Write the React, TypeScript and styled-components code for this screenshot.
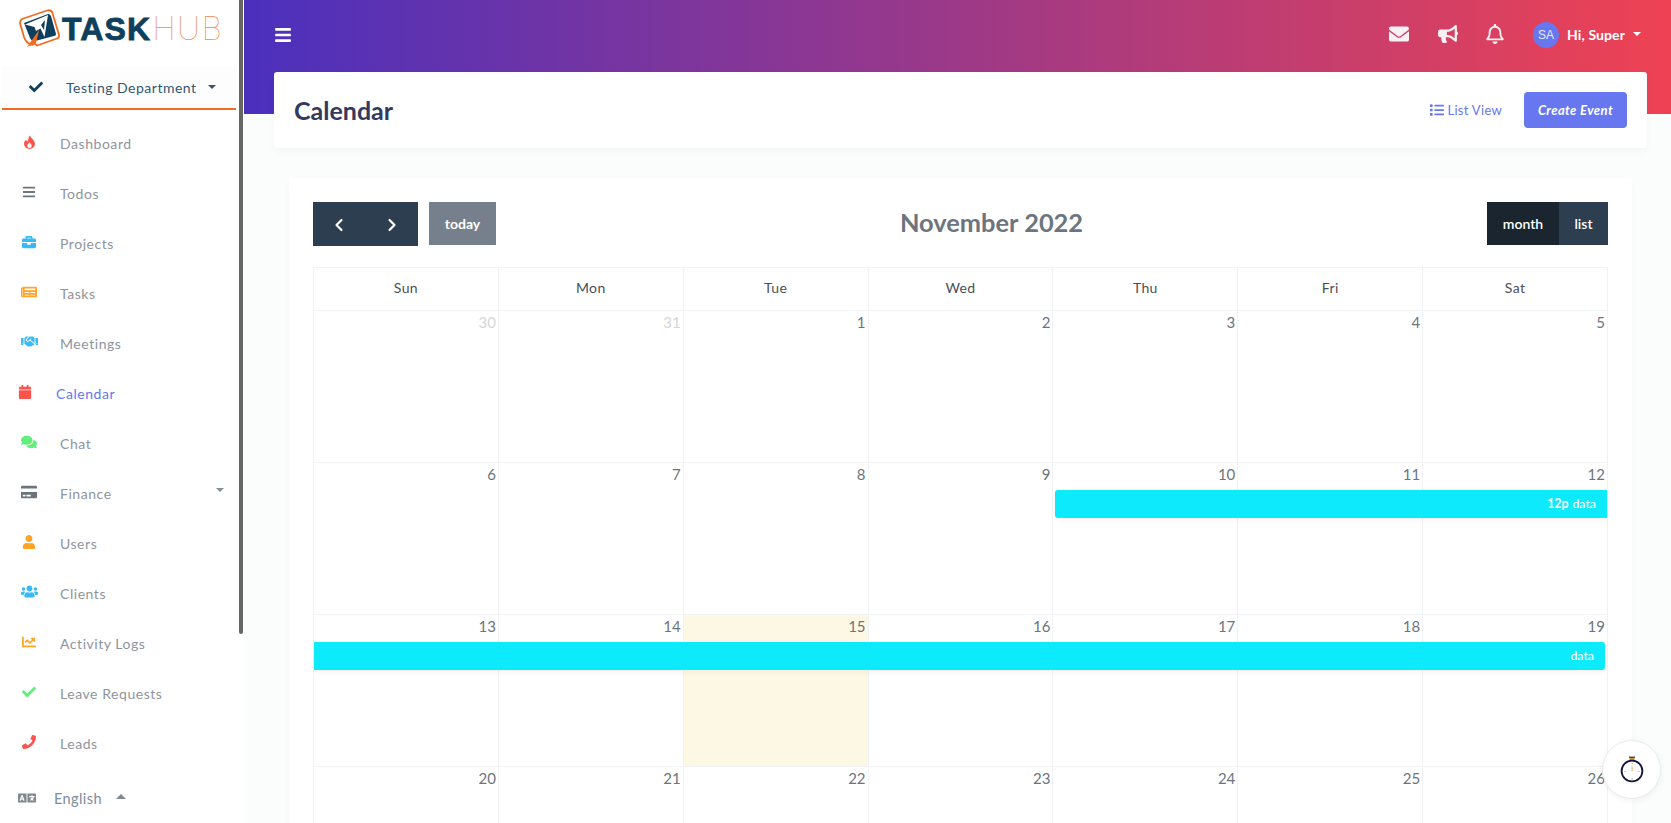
import React from "react";
import styled, { createGlobalStyle } from "styled-components";
import { FaBars, FaBriefcase, FaNewspaper, FaHandshake, FaCalendar, FaComments, FaCreditCard, FaUser, FaUsers, FaChartLine, FaCheck, FaPhone, FaLanguage, FaEnvelope, FaBullhorn, FaRegBell, FaList } from "react-icons/fa";
import { ChevronLeft, ChevronRight } from "lucide-react";

const FONT = `"Lato", "Noto Sans", "Liberation Sans", sans-serif`;

const Global = createGlobalStyle`
  html, body { margin: 0; padding: 0; height: 100%; overflow: hidden; }
  body { font-family: ${FONT}; background: #fafdfb; }
  #root { height: 100%; }
  * { box-sizing: border-box; }
`;

const Page = styled.div`display: flex; width: 1671px; height: 823px; overflow: hidden;`;

const Sidebar = styled.aside`
  position: relative; width: 244px; flex: none; height: 100%; background: #fff;
  display: flex; flex-direction: column;
`;
const Thumb = styled.div`
  position: absolute; top: 0; right: 1px; width: 4px; height: 634px; background: #666;
  border-radius: 0 0 3px 3px;
`;
const Brand = styled.div`
  height: 66px; display: flex; align-items: flex-start; padding: 7px 0 0 15px; flex: none;
`;
const BrandText = styled.div`
  display: flex; align-items: baseline; margin-left: -1px; margin-top: 4px; line-height: 36px;
`;
const Task = styled.span`
  font-family: "Liberation Sans", sans-serif; font-weight: 700; font-size: 32px; color: #0f3f5c;
  letter-spacing: 1.1px; -webkit-text-stroke: 0.8px #0f3f5c;
`;
const Hub = styled.span`
  font-family: "Inter", sans-serif; font-weight: 100; font-size: 32px; color: #f08a55;
  letter-spacing: 1.4px; margin-left: 1px;
`;
const Dept = styled.div`
  height: 44px; margin: 0 8px 0 2px; flex: none; display: flex; align-items: center;
  background: #fdfdfe; border-bottom: 2px solid #f26b21; color: #34566f; font-size: 14px;
  padding-left: 27px; letter-spacing: 0.5px;
`;
const DeptLabel = styled.span`margin-left: 23px; margin-top: 1px;`;
const Caret = styled.span<{ $up?: boolean; $c?: string; $s?: number }>`
  display: inline-block; width: 0; height: 0;
  border-left: ${p => p.$s ?? 4}px solid transparent; border-right: ${p => p.$s ?? 4}px solid transparent;
  ${p => p.$up ? `border-bottom: ${p.$s ?? 4}px solid ${p.$c ?? "#34566f"};` : `border-top: ${p.$s ?? 4}px solid ${p.$c ?? "#34566f"};`}
`;
const DeptCaret = styled(Caret)`margin: 0 0 0 11px;`;
const Nav = styled.nav`flex: 1; overflow: hidden; padding-top: 8px;`;
const NavItem = styled.div<{ $active?: boolean }>`
  height: 50px; display: flex; align-items: center; position: relative;
  font-size: 14px; letter-spacing: 0.55px;
  color: ${p => p.$active ? "#6777ef" : "#8e959c"};
  padding-left: ${p => p.$active ? 16 : 20}px;
`;
const NavIcon = styled.span<{ $c: string; $size?: number }>`
  width: 18px; display: flex; justify-content: center; color: ${p => p.$c}; font-size: ${p => p.$size ?? 14}px;
  margin-right: 22px; margin-top: -3px;
`;
const Flame = styled.svg`width: 11px; height: 14px; display: block;`;
const NavCaret = styled(Caret)`position: absolute; right: 20px; top: 20px;`;
const Lang = styled.div`
  height: 50px; flex: none; display: flex; align-items: center; padding: 0 0 0 18px; background: #fff;
  color: #7d8c9e; font-size: 14.5px; letter-spacing: .4px;
`;
const LangIcon = styled.span`color: #808891; display: flex; font-size: 18px; margin-right: 18px;`;
const LangCaret = styled(Caret)`margin-left: 14px; margin-top: -3px;`;

const Main = styled.main`
  flex: 1; min-width: 0; height: 100%; overflow: hidden;
  background: linear-gradient(to right, #4b30bd, #ee4253) top left / 100% 114px no-repeat, #fafdfb;
`;
const TopBar = styled.header`
  height: 72px; display: flex; align-items: center; padding: 0 30px 4px 30px; color: #fff;
`;
const Burger = styled.span`display: flex; font-size: 18px; margin-top: 2px;`;
const TopIcons = styled.div`margin-left: auto; display: flex; align-items: center;`;
const TopIcon = styled.span<{ $w: number; $gap?: number }>`
  display: flex; justify-content: center; width: ${p => p.$w}px; margin-left: ${p => p.$gap ?? 0}px;
  font-size: 20px; color: #f7f1f3;
`;
const Avatar = styled.span`
  width: 26px; height: 26px; border-radius: 50%; background: #6777ef; color: #e8e8f8; font-size: 12px;
  display: flex; align-items: center; justify-content: center; margin-left: 28px; margin-right: 8px; margin-top: 2px;
  font-family: "Liberation Sans", sans-serif;
`;
const Hi = styled.span`font-weight: 700; font-size: 14px; letter-spacing: 0.1px;`;
const HiCaret = styled(Caret)`margin-left: 8px; margin-top: -1px; border-top-color: #fff;`;

const HeaderCard = styled.section`
  height: 76px; margin: 0 24px 30px 30px; background: #fff; border-radius: 3px;
  box-shadow: 0 4px 8px rgba(0,0,0,.03); display: flex; align-items: center; padding: 0 20px 0 20px;
`;
const Title = styled.h1`margin: 0; font-size: 25px; font-weight: 700; color: #34395e;`;
const Actions = styled.div`margin-left: auto; display: flex; align-items: center;`;
const ListLink = styled.span`
  color: #6777ef; font-size: 13px; display: flex; align-items: center; gap: 3px; margin-right: 22px; letter-spacing: .3px;
`;
const CreateBtn = styled.span`
  width: 103px; height: 36px; background: #6777ef; color: #fff; border-radius: 4px; font-size: 13px;
  font-style: italic; font-weight: 700; display: flex; align-items: center; justify-content: center; letter-spacing: .4px;
`;

const Card = styled.section`
  margin: 0 39px 0 45px; background: #fff; border-radius: 3px; padding: 24px;
  box-shadow: 0 4px 8px rgba(0,0,0,.03);
`;
const Toolbar = styled.div`display: flex; justify-content: space-between; align-items: flex-start; margin-bottom: 21px;`;
const ToolLeft = styled.div`display: flex; gap: 11px;`;
const NavGroup = styled.div`display: flex; width: 105px; height: 44px; background: #2c3e50; color: #fff;`;
const Arrow = styled.span`flex: 1; display: flex; align-items: center; justify-content: center; padding-top: 1px;`;
const Today = styled.span`
  width: 67px; height: 43px; background: #76808c; color: #fff; font-size: 14px; font-weight: 700;
  display: flex; align-items: center; justify-content: center;
`;
const Month = styled.h2`margin: 0; padding-top: 3px; font-size: 25.4px; line-height: 34px; font-weight: 700; color: #6c757d;`;
const ViewGroup = styled.div`display: flex; height: 43px; color: #fff; font-size: 14px;`;
const ViewBtn = styled.span<{ $w: number; $on?: boolean }>`
  width: ${p => p.$w}px; background: ${p => p.$on ? "#1a252f" : "#2c3e50"};
  display: flex; align-items: center; justify-content: center; font-weight: 600;
`;
const Grid = styled.div`border: solid #f1f2f4; border-width: 1px 0 0 1px; width: 1295px;`;
const HeadRow = styled.div`display: grid; grid-template-columns: repeat(7, 1fr); height: 43px; border-bottom: 1px solid #f1f2f4;`;
const HeadCell = styled.div`
  display: flex; align-items: center; justify-content: center; font-size: 14px; color: #495057;
  letter-spacing: .35px; border-right: 1px solid #f1f2f4; padding-bottom: 3px;
`;
const Week = styled.div`display: grid; grid-template-columns: repeat(7, 1fr); grid-template-rows: 152px; `;
const Day = styled.div<{ $col: number; $today?: boolean; $muted?: boolean }>`
  grid-row: 1; grid-column: ${p => p.$col}; text-align: right; padding: 2px 2px 0 0; font-size: 15px; line-height: 18px;
  color: ${p => p.$muted ? "#d4d6d8" : "#6c757d"}; background: ${p => p.$today ? "#fcf8e3" : "transparent"};
  border-right: 1px solid #f1f2f4; border-bottom: 1px solid #f1f2f4;
`;
const Event = styled.div<{ $from: number; $to: number; $ml: number; $mr: number; $round: string }>`
  grid-row: 1; grid-column: ${p => p.$from} / ${p => p.$to}; align-self: start; z-index: 1;
  margin: 27px ${p => p.$mr}px 0 ${p => p.$ml}px; height: 28px; background: #0ceafb; border-radius: ${p => p.$round};
  color: #fff; font-size: 12.3px; font-weight: 500; line-height: 28px; text-align: right; padding-right: 11px;
  box-shadow: 0 3px 6px rgba(0,0,0,.04);
`;
const EventTime = styled.b`font-weight: 700; margin-right: 4px;`;

const TimerBtn = styled.button`
  position: fixed; left: 1602px; top: 740px; width: 59px; height: 59px; border-radius: 50%; padding: 0;
  background: #fff; border: 1px solid #e6e9ee; display: flex; align-items: center; justify-content: center;
  box-shadow: 0 2px 6px rgba(0,0,0,.05);
`;

const Logo = () => (
  <svg width="48" height="42" viewBox="15 8 48 42">
    <path d="M22 20 L47 11.5 Q51 10.5 52.5 14 L59 36 Q59.5 39 57 39.5 L37 46.5 L34.5 44.5 L32 46 Q26 44 24 38 L20 24 Q20 21 22 20 Z" fill="#fff" stroke="#f26b21" strokeWidth="1.8" />
    <path d="M24 24 L48 15 Q50 15 51 17 L56 35 Q56 37 54 37 L35 42 Q31 42 30 39 Z" fill="#0f3f5c" />
    <path d="M25 25.5 L48 16 L44.5 38 L40.5 29.5 L36 32 L34.5 28 Z" fill="#fff" />
    <path d="M41 26 L45 21 L44 31 Z" fill="#0f3f5c" />
    <path d="M27 48 L39 31 L36 44 Z" fill="#f26b21" />
  </svg>
);

const Timer = () => (
  <svg width="26" height="28" viewBox="0 0 26 28">
    <rect x="10" y="0.5" width="6" height="1.5" fill="#555" />
    <rect x="10.5" y="2" width="5" height="2.5" fill="#d9822b" />
    <circle cx="13" cy="15" r="10.4" fill="#fff" stroke="#14143a" strokeWidth="1.8" />
    <rect x="12.5" y="10.5" width="1.2" height="4.5" fill="#f4b266" />
    <rect x="12.6" y="7" width="1" height="1" fill="#999" />
    <rect x="12.6" y="22" width="1" height="1.6" fill="#aaa" />
    <rect x="5.5" y="15" width="1" height="1" fill="#999" />
    <rect x="19.5" y="15" width="1" height="1" fill="#999" />
  </svg>
);

const FireIcon = () => (
  <Flame viewBox="0 0 12 15">
    <path d="M6.5 0 C7 3 12 5.5 12 9.5 A6 5.5 0 0 1 0 9.5 C0 7.5 1 6 2.5 5 C2.7 6 3.2 6.8 4 7 C4.6 5 4.8 2 6.5 0 Z" fill="currentColor" />
    <path d="M6 7.5 C6.5 9 8.4 10 8.4 11.6 A2.4 2.4 0 0 1 3.6 11.6 C3.6 10 5.5 9 6 7.5 Z" fill="#fff" />
  </Flame>
);

const items: { label: string; icon: React.ReactNode; c: string; active?: boolean; size?: number }[] = [
  { label: "Dashboard", icon: <FireIcon />, c: "#fc544b" },
  { label: "Todos", icon: <FaBars />, c: "#6c757d" },
  { label: "Projects", icon: <FaBriefcase />, c: "#3abaf4" },
  { label: "Tasks", icon: <FaNewspaper />, c: "#ffa426", size: 16 },
  { label: "Meetings", icon: <FaHandshake />, c: "#3abaf4", size: 17 },
  { label: "Calendar", icon: <FaCalendar />, c: "#fc544b", active: true },
  { label: "Chat", icon: <FaComments />, c: "#63ed7a", size: 16 },
  { label: "Finance", icon: <FaCreditCard />, c: "#6c757d", size: 16 },
  { label: "Users", icon: <FaUser />, c: "#ffa426" },
  { label: "Clients", icon: <FaUsers />, c: "#3abaf4", size: 17 },
  { label: "Activity Logs", icon: <FaChartLine />, c: "#ffa426" },
  { label: "Leave Requests", icon: <FaCheck />, c: "#63ed7a" },
  { label: "Leads", icon: <FaPhone />, c: "#fc544b" },
];

type D = { n: number; muted?: boolean; today?: boolean };
const weeks: { days: D[]; ev?: React.ReactNode }[] = [
  { days: [{ n: 30, muted: true }, { n: 31, muted: true }, { n: 1 }, { n: 2 }, { n: 3 }, { n: 4 }, { n: 5 }] },
  {
    days: [6, 7, 8, 9, 10, 11, 12].map(n => ({ n })),
    ev: <Event $from={5} $to={8} $ml={2} $mr={1} $round="3px 0 0 3px"><EventTime>12p</EventTime>data</Event>,
  },
  {
    days: [13, 14, 15, 16, 17, 18, 19].map(n => ({ n, today: n === 15 })),
    ev: <Event $from={1} $to={8} $ml={0} $mr={3} $round="0 3px 3px 0">data</Event>,
  },
  { days: [20, 21, 22, 23, 24, 25, 26].map(n => ({ n })) },
];

export default function App() {
  return (
    <Page>
      <Global />
      <Sidebar>
        <Thumb />
        <Brand>
          <Logo />
          <BrandText><Task>TASK</Task><Hub>HUB</Hub></BrandText>
        </Brand>
        <Dept>
          <FaCheck size={14} color="#0f3f5c" />
          <DeptLabel>Testing Department</DeptLabel>
          <DeptCaret />
        </Dept>
        <Nav>
          {items.map(it => (
            <NavItem key={it.label} $active={it.active}>
              <NavIcon $c={it.c} $size={it.size}>{it.icon}</NavIcon>
              {it.label}
              {it.label === "Finance" && <NavCaret $c="#868e96" />}
            </NavItem>
          ))}
        </Nav>
        <Lang>
          <LangIcon><FaLanguage /></LangIcon>
          English
          <LangCaret $up $c="#808891" $s={5} />
        </Lang>
      </Sidebar>
      <Main>
        <TopBar>
          <Burger><FaBars /></Burger>
          <TopIcons>
            <TopIcon $w={20}><FaEnvelope /></TopIcon>
            <TopIcon $w={24} $gap={27}><FaBullhorn /></TopIcon>
            <TopIcon $w={20} $gap={25}><FaRegBell /></TopIcon>
            <Avatar>SA</Avatar>
            <Hi>Hi, Super</Hi>
            <HiCaret />
          </TopIcons>
        </TopBar>
        <HeaderCard>
          <Title>Calendar</Title>
          <Actions>
            <ListLink><FaList size={14} />List View</ListLink>
            <CreateBtn>Create Event</CreateBtn>
          </Actions>
        </HeaderCard>
        <Card>
          <Toolbar>
            <ToolLeft>
              <NavGroup>
                <Arrow><ChevronLeft size={20} strokeWidth={2.6} /></Arrow>
                <Arrow><ChevronRight size={20} strokeWidth={2.6} /></Arrow>
              </NavGroup>
              <Today>today</Today>
            </ToolLeft>
            <Month>November 2022</Month>
            <ViewGroup>
              <ViewBtn $w={72} $on>month</ViewBtn>
              <ViewBtn $w={49}>list</ViewBtn>
            </ViewGroup>
          </Toolbar>
          <Grid>
            <HeadRow>
              {["Sun", "Mon", "Tue", "Wed", "Thu", "Fri", "Sat"].map(d => <HeadCell key={d}>{d}</HeadCell>)}
            </HeadRow>
            {weeks.map((w, i) => (
              <Week key={i}>
                {w.days.map((d, j) => (
                  <Day key={d.n} $col={j + 1} $today={d.today} $muted={d.muted}>{d.n}</Day>
                ))}
                {w.ev}
              </Week>
            ))}
          </Grid>
        </Card>
      </Main>
      <TimerBtn aria-label="timer"><Timer /></TimerBtn>
    </Page>
  );
}
